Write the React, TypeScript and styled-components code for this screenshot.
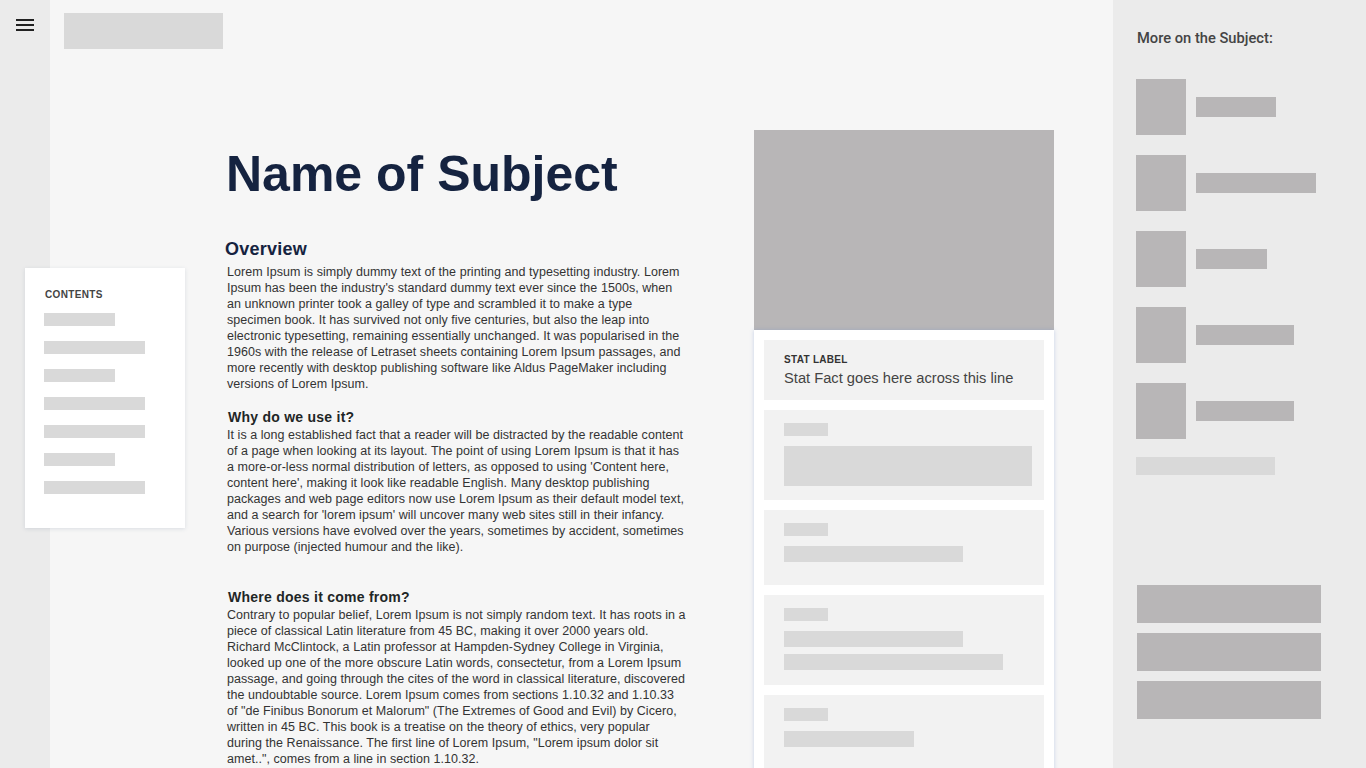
import React from 'react';
import styled, { createGlobalStyle } from 'styled-components';

const GlobalStyle = createGlobalStyle`
  html, body {
    margin: 0;
    padding: 0;
    background: #f6f6f6;
    overflow: hidden;
  }
  * {
    box-sizing: border-box;
  }
`

const colors = {
  rail: '#ebebeb',
  page: '#f6f6f6',
  dark: '#b8b6b7',
  light: '#d9d9d9',
  block: '#f2f2f2',
  navy: '#152340',
}

const tocBars = [71, 101, 71, 101, 101, 71, 101];
const relatedBars = [80, 120, 71, 98, 98];

// line breaks follow the layout of the original page
const overview = [
  'Lorem Ipsum is simply dummy text of the printing and typesetting industry. Lorem',
  "Ipsum has been the industry's standard dummy text ever since the 1500s, when",
  'an unknown printer took a galley of type and scrambled it to make a type',
  'specimen book. It has survived not only five centuries, but also the leap into',
  'electronic typesetting, remaining essentially unchanged. It was popularised in the',
  '1960s with the release of Letraset sheets containing Lorem Ipsum passages, and',
  'more recently with desktop publishing software like Aldus PageMaker including',
  'versions of Lorem Ipsum.',
];

const whyUse = [
  'It is a long established fact that a reader will be distracted by the readable content',
  'of a page when looking at its layout. The point of using Lorem Ipsum is that it has',
  "a more-or-less normal distribution of letters, as opposed to using 'Content here,",
  "content here', making it look like readable English. Many desktop publishing",
  'packages and web page editors now use Lorem Ipsum as their default model text,',
  "and a search for 'lorem ipsum' will uncover many web sites still in their infancy.",
  'Various versions have evolved over the years, sometimes by accident, sometimes',
  'on purpose (injected humour and the like).',
];

const whereFrom = [
  'Contrary to popular belief, Lorem Ipsum is not simply random text. It has roots in a',
  'piece of classical Latin literature from 45 BC, making it over 2000 years old.',
  'Richard McClintock, a Latin professor at Hampden-Sydney College in Virginia,',
  'looked up one of the more obscure Latin words, consectetur, from a Lorem Ipsum',
  'passage, and going through the cites of the word in classical literature, discovered',
  'the undoubtable source. Lorem Ipsum comes from sections 1.10.32 and 1.10.33',
  'of "de Finibus Bonorum et Malorum" (The Extremes of Good and Evil) by Cicero,',
  'written in 45 BC. This book is a treatise on the theory of ethics, very popular',
  'during the Renaissance. The first line of Lorem Ipsum, "Lorem ipsum dolor sit',
  'amet..", comes from a line in section 1.10.32.',
];

const Lines = ({ lines }: { lines: string[] }) => (
  <>
    {lines.map((line, i) => (
      <React.Fragment key={i}>
        {line}
        {i < lines.length - 1 && <br />}
      </React.Fragment>
    ))}
  </>
);

export default function App() {
  return (
    <>
      <GlobalStyle />
      <Page>
        <Rail>
          <MenuIcon viewBox="0 0 24 24" aria-label="menu">
            <path d="M3 18h18v-2H3v2zm0-5h18v-2H3v2zm0-7v2h18V6H3z" />
          </MenuIcon>
        </Rail>

        <Main>
          <Header>
            <Logo />
          </Header>

          <Body>
            <Toc>
              <TocTitle>Contents</TocTitle>
              <TocList>
                {tocBars.map((w, i) => (
                  <Bar key={i} $w={w} $h={13} />
                ))}
              </TocList>
            </Toc>

            <Article>
              <Title>Name of Subject</Title>
              <Overview>Overview</Overview>
              <Paragraph>
                <Lines lines={overview} />
              </Paragraph>

              <SubHeading>Why do we use it?</SubHeading>
              <Paragraph $extra>
                <Lines lines={whyUse} />
              </Paragraph>

              <SubHeading>Where does it come from?</SubHeading>
              <Paragraph>
                <Lines lines={whereFrom} />
              </Paragraph>
            </Article>

            <Infobox>
              <InfoImage />
              <InfoCard>
                <StatBlock $h={60} $pt={14}>
                  <StatLabel>Stat Label</StatLabel>
                  <StatFact>Stat Fact goes here across this line</StatFact>
                </StatBlock>

                <StatBlock $h={90}>
                  <Bar $w={44} $h={13} $mb={10} />
                  <Bar $w={248} $h={40} />
                </StatBlock>

                <StatBlock $h={75}>
                  <Bar $w={44} $h={13} $mb={10} />
                  <Bar $w={179} $h={16} />
                </StatBlock>

                <StatBlock $h={90}>
                  <Bar $w={44} $h={13} $mb={10} />
                  <Bar $w={179} $h={16} $mb={7} />
                  <Bar $w={219} $h={16} />
                </StatBlock>

                <StatBlock $h={90}>
                  <Bar $w={44} $h={13} $mb={10} />
                  <Bar $w={130} $h={16} />
                </StatBlock>
              </InfoCard>
            </Infobox>
          </Body>
        </Main>

        <Sidebar>
          <SidebarTitle>More on the Subject:</SidebarTitle>
          <Related>
            {relatedBars.map((w, i) => (
              <RelatedItem key={i}>
                <Thumb />
                <Bar $w={w} $h={20} $color={colors.dark} />
              </RelatedItem>
            ))}
          </Related>
          <Bar $w={139} $h={18} $mt={18} />
          <Buttons>
            <SideButton />
            <SideButton />
            <SideButton />
          </Buttons>
        </Sidebar>
      </Page>
    </>
  );
}

const Page = styled.div`
  display: flex;
  width: 100%;
  height: 100vh;
  overflow: hidden;
  background: ${colors.page};
  font-family: 'Liberation Sans', Arial, sans-serif;
`

const Rail = styled.aside`
  flex: 0 0 50px;
  background: ${colors.rail};
  padding: 13px;
`

const MenuIcon = styled.svg`
  display: block;
  width: 24px;
  height: 24px;
  fill: #212121;
`

const Main = styled.main`
  flex: 1;
  min-width: 0;
  display: flex;
  flex-direction: column;
`

const Header = styled.header`
  padding: 13px 14px 0;
`

const Logo = styled.div`
  width: 159px;
  height: 36px;
  background: ${colors.light};
`

const Body = styled.div`
  display: flex;
  align-items: flex-start;
  margin-top: 81px;
`

const Toc = styled.nav`
  flex: 0 0 160px;
  margin: 138px 0 0 -25px;
  padding: 21px 19px 34px;
  background: #fff;
  box-shadow: 0 1px 4px rgba(60, 80, 110, 0.14);
`

const TocTitle = styled.div`
  font-size: 10px;
  line-height: 12px;
  font-weight: 700;
  letter-spacing: 0.35px;
  text-transform: uppercase;
  color: #444;
  padding-left: 1px;
  margin-bottom: 12px;
`

const TocList = styled.div`
  display: flex;
  flex-direction: column;
  gap: 15px;
`

const Bar = styled.div<{ $w: number; $h: number; $mb?: number; $mt?: number; $color?: string }>`
  flex: none;
  width: ${p => p.$w}px;
  height: ${p => p.$h}px;
  margin-top: ${p => p.$mt ?? 0}px;
  margin-bottom: ${p => p.$mb ?? 0}px;
  background: ${p => p.$color ?? colors.light};
`

const Article = styled.article`
  flex: 0 0 465px;
  min-width: 0;
  margin-left: 40px;
`

const Title = styled.h1`
  margin: 14px 0 0 1px;
  font-size: 50px;
  line-height: 60px;
  font-weight: 700;
  color: ${colors.navy};
`

const Overview = styled.h2`
  margin: 34px 0 4px;
  font-size: 18px;
  line-height: 22px;
  font-weight: 700;
  letter-spacing: 0.25px;
  color: ${colors.navy};
`

const SubHeading = styled.h3`
  margin: 16px 0 0;
  padding-left: 3px;
  font-size: 14px;
  line-height: 19px;
  font-weight: 700;
  letter-spacing: 0.25px;
  color: #1f2626;
`

const Paragraph = styled.p<{ $extra?: boolean }>`
  margin: 0 0 ${p => (p.$extra ? 33 : 0)}px;
  padding-left: 2px;
  font-size: 12.5px;
  line-height: 16px;
  letter-spacing: 0.05px;
  white-space: nowrap;
  color: #333;
`

const Infobox = styled.aside`
  flex: 0 0 300px;
  min-width: 0;
  margin-left: 64px;
`

const InfoImage = styled.div`
  height: 200px;
  background: ${colors.dark};
`

const InfoCard = styled.div`
  display: flex;
  flex-direction: column;
  gap: 10px;
  padding: 10px;
  background: #fff;
  box-shadow: 0 0 4px rgba(110, 140, 210, 0.35);
`

const StatBlock = styled.div<{ $h: number; $pt?: number }>`
  height: ${p => p.$h}px;
  padding: ${p => p.$pt ?? 13}px 20px 0;
  background: ${colors.block};
`

const StatLabel = styled.div`
  font-size: 10px;
  line-height: 12px;
  font-weight: 700;
  letter-spacing: 0.3px;
  text-transform: uppercase;
  color: #333;
`

const StatFact = styled.div`
  margin-top: 3px;
  font-size: 14.7px;
  line-height: 18px;
  color: #444;
`

const Sidebar = styled.aside`
  flex: 0 0 253px;
  background: ${colors.rail};
  padding: 29px 23px 0;
`

const SidebarTitle = styled.h4`
  margin: 0 0 32px 1px;
  font-family: Roboto, 'Liberation Sans', sans-serif;
  font-size: 14.7px;
  line-height: 18px;
  font-weight: 500;
  color: #444;
`

const Related = styled.div`
  display: flex;
  flex-direction: column;
  gap: 20px;
`

const RelatedItem = styled.div`
  display: flex;
  align-items: center;
  gap: 10px;
`

const Thumb = styled.div`
  width: 50px;
  height: 56px;
  background: ${colors.dark};
`

const Buttons = styled.div`
  display: flex;
  flex-direction: column;
  gap: 10px;
  margin: 110px 0 0 1px;
`

const SideButton = styled.div`
  width: 184px;
  height: 38px;
  background: ${colors.dark};
`
